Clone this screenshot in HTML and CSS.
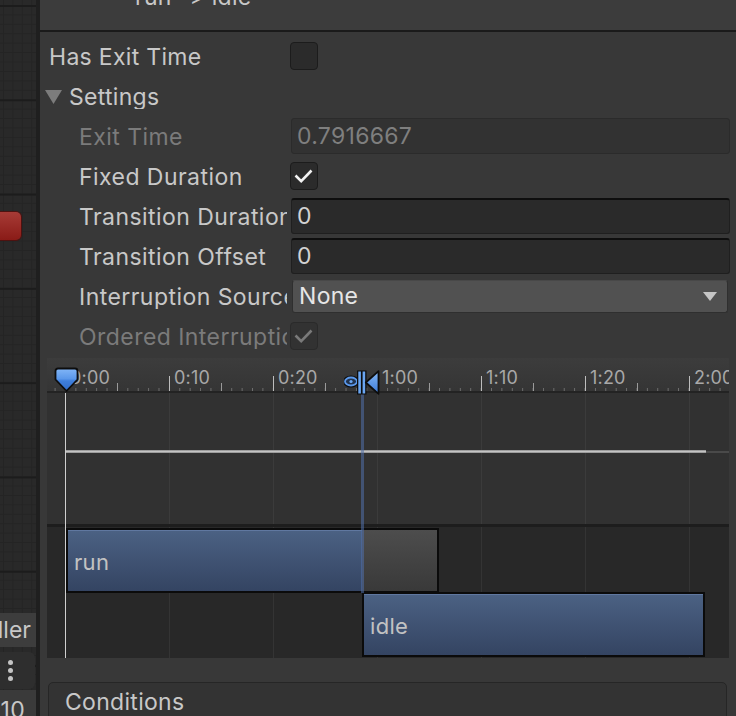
FILE: index.html
```html
<!DOCTYPE html>
<html>
<head>
<meta charset="utf-8">
<link rel="stylesheet" href="styles.css">
</head>
<body>
<div class="app">
  <aside class="graph">
    <div class="red-node"></div>
    <div class="tab-name">ller</div>
    <div class="menu-btn"><span class="dot"></span><span class="dot"></span><span class="dot"></span></div>
    <div class="tab-num">10</div>
  </aside>
  <main class="inspector">
    <div class="header"><span class="title">run -&gt; idle</span></div>
    <div class="rows">
      <div class="row">
        <div class="label">Has Exit Time</div>
        <div class="checkbox"></div>
      </div>
      <div class="row foldout">
        <svg class="tri" width="17" height="14" viewBox="0 0 17 14"><polygon points="0,0 17,0 8.5,14" fill="#7c7c7c"/></svg>
        <div class="label">Settings</div>
      </div>
      <div class="row">
        <div class="label indent disabled">Exit Time</div>
        <div class="field disabled">0.7916667</div>
      </div>
      <div class="row">
        <div class="label indent">Fixed Duration</div>
        <div class="checkbox"><svg width="26" height="26" viewBox="1 1 26 26"><path d="M5.5 13.5 L11.2 19.2 L21.5 8.5" fill="none" stroke="#f2f2f2" stroke-width="2.6" stroke-linejoin="miter"/></svg></div>
      </div>
      <div class="row">
        <div class="label indent">Transition Duration</div>
        <div class="field">0</div>
      </div>
      <div class="row">
        <div class="label indent">Transition Offset</div>
        <div class="field">0</div>
      </div>
      <div class="row">
        <div class="label indent">Interruption Source</div>
        <div class="dropdown"><span>None</span><svg width="14" height="9" viewBox="0 0 14 9"><polygon points="0,0 14,0 7,9" fill="#c6c6c6"/></svg></div>
      </div>
      <div class="row">
        <div class="label indent disabled">Ordered Interruption</div>
        <div class="checkbox off"><svg width="26" height="26" viewBox="1 1 26 26"><path d="M5.5 13.5 L11.2 19.2 L21.5 8.5" fill="none" stroke="#7a7a7a" stroke-width="2.6"/></svg></div>
      </div>
    </div>

    <div class="timeline">
      <div class="ruler">
        <span class="tl-label">0:00</span>
        <span class="tl-label">0:10</span>
        <span class="tl-label">0:20</span>
        <span class="tl-label">1:00</span>
        <span class="tl-label">1:10</span>
        <span class="tl-label">1:20</span>
        <span class="tl-label">2:00</span>
      </div>
      <div class="upper">
        <div class="curve"></div>
        <div class="curve-tail"></div>
      </div>
      <div class="split"></div>
      <div class="lower">
        <div class="bar run">
          <div class="seg blue">run</div>
          <div class="seg gray"></div>
        </div>
        <div class="bar idle">
          <div class="seg blue">idle</div>
        </div>
      </div>
      <div class="start-line"></div>
      <div class="trans-line"></div>
      <svg class="marker-start" width="25" height="26" viewBox="0 0 25 26">
        <defs>
          <linearGradient id="mg" x1="0" y1="0" x2="0" y2="1">
            <stop offset="0" stop-color="#82b6f7"/>
            <stop offset="0.45" stop-color="#5b98ea"/>
            <stop offset="0.55" stop-color="#3f7fdc"/>
            <stop offset="1" stop-color="#2f6cc9"/>
          </linearGradient>
        </defs>
        <path d="M1.5 4 Q1.5 1.5 4 1.5 H21 Q23.5 1.5 23.5 4 V12.5 L12.5 24 L1.5 12.5 Z" fill="url(#mg)" stroke="#0d0d0d" stroke-width="1.8" stroke-linejoin="round"/>
      </svg>
      <svg class="marker-end" width="37" height="26" viewBox="0 0 37 26">
        <defs>
          <linearGradient id="tg" x1="0" y1="0" x2="0" y2="1">
            <stop offset="0" stop-color="#86b9f7"/>
            <stop offset="1" stop-color="#3a78d6"/>
          </linearGradient>
        </defs>
        <ellipse cx="7" cy="11.5" rx="6" ry="4" fill="#0d0d0d" stroke="#0d0d0d" stroke-width="4"/>
        <ellipse cx="7" cy="11.5" rx="6" ry="4" fill="#22344f" stroke="#5b98ea" stroke-width="1.8"/>
        <circle cx="7" cy="11.5" r="1.6" fill="#6aa6f2"/>
        <rect x="13" y="0.5" width="9.5" height="24" fill="#0d0d0d"/>
        <rect x="14.3" y="1.5" width="2.6" height="22" fill="#6aa6f2"/>
        <rect x="18.6" y="1.5" width="2.6" height="22" fill="#6aa6f2"/>
        <polygon points="21.8,12.5 34.5,1.2 34.5,23.8" fill="url(#tg)" stroke="#0d0d0d" stroke-width="1.8" stroke-linejoin="round"/>
      </svg>
    </div>

    <div class="conditions">Conditions</div>
  </main>
</div>
</body>
</html>
```

FILE: styles.css
```css
* { box-sizing: border-box; }
html, body { margin: 0; padding: 0; }
body {
  width: 736px;
  height: 716px;
  overflow: hidden;
  background: #383838;
  font-family: Inter, "Noto Sans", sans-serif;
  font-size: 23px;
  letter-spacing: 0.3px;
  color: #c8c8c8;
}
.app { display: flex; height: 716px; }

/* left graph strip */
.graph {
  width: 40px;
  flex: none;
  border-right: 4px solid #1f1f1f;
  background-color: #292929;
  background-image:
    linear-gradient(to bottom, #1c1c1c 0 2px, transparent 2px),
    linear-gradient(to bottom, #242424 0 1px, transparent 1px),
    linear-gradient(to right, #242424 0 1px, transparent 1px);
  background-size: 100% 94.3px, 100% 9.43px, 9.43px 100%;
  background-position: 0 5px, 0 5px, 3px 0;
  display: flex;
  flex-direction: column;
}
.red-node {
  margin-top: 212px;
  width: 21px;
  height: 28px;
  border-radius: 0 5px 5px 0;
  background: linear-gradient(to bottom, #a73b36, #8a1b17);
  box-shadow: 0 0 0 1px #4e1210;
}
.tab-name {
  margin-top: 373px;
  height: 34px;
  background: #3d3d3d;
  display: flex;
  justify-content: flex-end;
  align-items: center;
  padding-right: 5px;
  overflow: hidden;
  white-space: nowrap;
  line-height: 23px;
  letter-spacing: 0;
}
.menu-btn {
  margin-top: 5px;
  width: 35px;
  height: 37px;
  border-radius: 0 6px 6px 0;
  background: #2e2e2e;
  display: flex;
  flex-direction: column;
  justify-content: center;
  gap: 3px;
  padding-left: 8px;
}
.dot { width: 5px; height: 5px; border-radius: 50%; background: #c4c4c4; }
.tab-num {
  margin-top: 1px;
  height: 26px;
  background: #3a3a3a;
  text-align: right;
  padding: 9px 11px 0 0;
  line-height: 23px;
  overflow: hidden;
}

/* inspector */
.inspector {
  flex: 1;
  display: flex;
  flex-direction: column;
  min-width: 0;
}
.header {
  height: 32px;
  flex: none;
  background: #3c3c3c;
  border-bottom: 2px solid #1a1a1a;
  overflow: hidden;
  padding-left: 95px;
}
.title { display: block; margin-top: -14px; line-height: 23px; white-space: nowrap; }

.rows { padding-top: 5px; }
.row {
  display: flex;
  align-items: center;
  height: 40px;
  padding: 0 6px 0 9px;
}
.label {
  width: 238px;
  flex: none;
  overflow: hidden;
  white-space: nowrap;
  line-height: 23px;
}
.label.indent { padding-left: 30px; letter-spacing: 0.45px; }
.label.disabled { color: #7b7b7b; }
.foldout { padding-left: 5px; }
.foldout .tri { flex: none; margin-right: 7px; }

.checkbox {
  align-self: flex-start;
  margin: 5px 0 0 3px;
  width: 28px;
  height: 28px;
  border-radius: 4px;
  background: #2b2b2b;
  border: 1px solid #1c1c1c;
}
.checkbox svg { display: block; }
.checkbox.off { background: #323232; border-color: #2a2a2a; }

.field {
  align-self: flex-start;
  margin: 1px 0 0 4px;
  flex: 1;
  height: 36px;
  border-radius: 3px;
  background: #2a2a2a;
  border: 1px solid #1f1f1f;
  border-top: 2px solid #0e0e0e;
  padding-left: 5px;
  line-height: 32px;
  color: #d2d2d2;
}
.field.disabled {
  background: #323232;
  border: 1px solid #2b2b2b;
  line-height: 34px;
  color: #7f7f7f;
}
.dropdown {
  align-self: flex-start;
  margin: 3px 2px 0 5px;
  flex: 1;
  height: 33px;
  border-radius: 3px;
  background: #515151;
  border: 1px solid #2f2f2f;
  border-top-color: #484848;
  display: flex;
  align-items: center;
  justify-content: space-between;
  padding: 0 10px 0 6px;
  color: #e6e6e6;
  line-height: 23px;
}
.dropdown svg { display: block; }

/* timeline */
.timeline {
  position: relative;
  margin: 1px 7px 0 7px;
  height: 300px;
  flex: none;
  display: flex;
  flex-direction: column;
  overflow: hidden;
}
.ruler {
  height: 35px;
  flex: none;
  display: flex;
  padding: 11px 0 0 18px;
  border-bottom: 2px solid #232323;
  overflow: hidden;
  background-color: #383838;
  background-image:
    linear-gradient(to right, #bdbdbd 0 1px, transparent 1px),
    linear-gradient(to right, #9a9a9a 0 1px, transparent 1px),
    linear-gradient(to right, #6e6e6e 0 1px, transparent 1px),
    linear-gradient(to bottom, #3c3c3c, #353535);
  background-size: 104px 15px, 52px 8px, 10.4px 3px, 100% 100%;
  background-position: 18px 100%, 18px 100%, 18px 100%, 0 0;
  background-repeat: repeat-x, repeat-x, repeat-x, no-repeat;
}
.tl-label {
  width: 104px;
  flex: none;
  padding-left: 5px;
  font-size: 18px;
  line-height: 18px;
  letter-spacing: 0.2px;
  color: #a8a8a8;
  white-space: nowrap;
}
.upper {
  position: relative;
  height: 131px;
  flex: none;
  background-color: #313131;
  background-image: linear-gradient(to right, #3b3b3b 0 1px, transparent 1px);
  background-size: 104px 100%;
  background-position: 18px 0;
}
.curve {
  position: absolute;
  left: 18px;
  top: 57px;
  width: 641px;
  height: 3px;
  background: linear-gradient(to bottom, #8a8a8a, #c4c4c4 50%, #8a8a8a);
}
.curve-tail {
  position: absolute;
  left: 659px;
  top: 58px;
  right: 0;
  height: 2px;
  background: #4a4a4a;
}
.split { height: 3px; flex: none; background: #1d1d1d; }
.lower {
  height: 131px;
  flex: none;
  padding-top: 1px;
  background-color: #282828;
  background-image: linear-gradient(to right, #343434 0 1px, transparent 1px);
  background-size: 104px 100%;
  background-position: 18px 0;
}
.bar {
  height: 65px;
  border: 2px solid #0b0b0b;
  display: flex;
}
.bar.run { margin-left: 19px; width: 373px; }
.bar.idle { margin-left: 315px; width: 343px; margin-top: -1px; }
.seg {
  height: 100%;
  display: flex;
  align-items: center;
  padding: 3px 0 0 6px;
  font-size: 22px;
  line-height: 23px;
  color: #c2c2c2;
}
.seg.blue {
  background: linear-gradient(to bottom, #6078a0 0 1px, #4b6183 1px, #344462);
}
.bar.run .seg.blue { width: 294px; flex: none; }
.bar.idle .seg.blue { flex: 1; }
.seg.gray {
  flex: 1;
  background: linear-gradient(to bottom, #4d4d4d, #393939);
}
.start-line {
  position: absolute;
  left: 18px;
  top: 35px;
  bottom: 0;
  width: 1px;
  background: #cfcfcf;
}
.trans-line {
  position: absolute;
  left: 314px;
  top: 30px;
  bottom: 65px;
  width: 3px;
  background: rgba(80, 112, 170, 0.55);
}
.marker-start { position: absolute; left: 7px; top: 9px; }
.marker-end { position: absolute; left: 297px; top: 12px; }

.conditions {
  margin: 24px 9px 0 8px;
  height: 60px;
  flex: none;
  background: #333333;
  border: 1px solid #262626;
  border-radius: 5px 5px 0 0;
  padding-left: 16px;
  line-height: 39px;
}
```
